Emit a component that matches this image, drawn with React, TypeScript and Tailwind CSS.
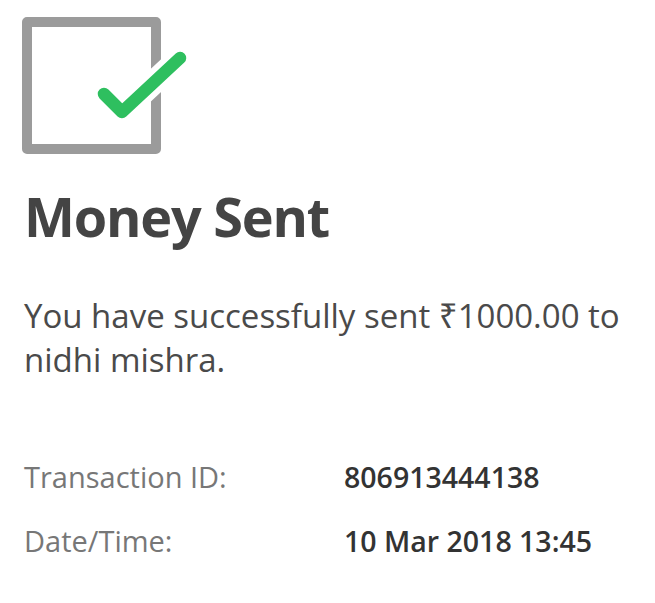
import React from "react";

function SentIcon() {
  return (
    <svg
      width="170"
      height="145"
      viewBox="0 0 170 145"
      className="-ml-1 block"
      fill="none"
    >
      <rect
        x="7"
        y="10"
        width="129"
        height="127"
        stroke="#9b9b9b"
        strokeWidth="10"
        strokeLinejoin="round"
      />
      <polyline
        points="84,82 102,100 160,46"
        stroke="#ffffff"
        strokeWidth="24"
        strokeLinecap="round"
        strokeLinejoin="round"
      />
      <polyline
        points="84,82 102,100 160,46"
        stroke="#2ebf5f"
        strokeWidth="12.5"
        strokeLinecap="round"
        strokeLinejoin="round"
      />
    </svg>
  );
}

export default function App() {
  return (
    <div
      className="min-h-[603px] w-full bg-white pl-6 pt-3 pr-4"
      style={{ fontFamily: '"Open Sans", "Noto Sans", sans-serif' }}
    >
      <SentIcon />
      <h1 className="mt-8 text-[54px] leading-[54px] font-bold tracking-[-1.2px] text-[#444444]">
        Money Sent
      </h1>
      <p className="mt-[51px] text-[33px] leading-[44px] text-[#4a4a4a]">
        You have successfully sent ₹1000.00 to nidhi mishra.
      </p>
      <div className="mt-[75px] grid grid-cols-[320px_1fr] gap-y-6">
        <div className="text-[29px] leading-[40px] text-[#777777]">Transaction ID:</div>
        <div className="text-[28.5px] leading-[40px] font-semibold text-[#333333]">806913444138</div>
        <div className="text-[29px] leading-[40px] text-[#777777]">Date/Time:</div>
        <div className="text-[28.5px] leading-[40px] font-semibold text-[#333333]">10 Mar 2018 13:45</div>
      </div>
    </div>
  );
}
